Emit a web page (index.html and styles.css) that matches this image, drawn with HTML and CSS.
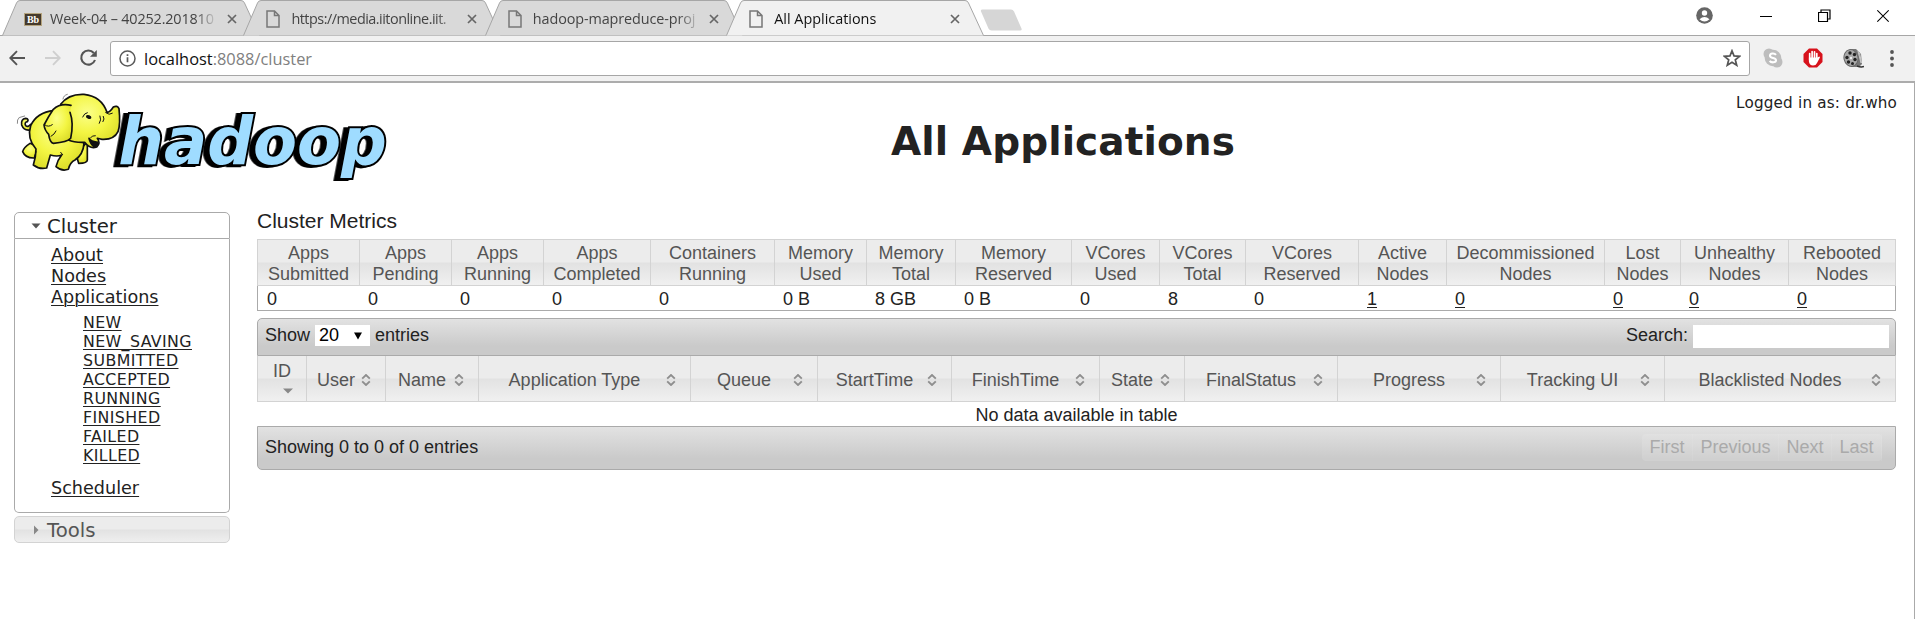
FILE: index.html
```html
<!DOCTYPE html>
<html lang="en">
<head>
<meta charset="utf-8">
<title>All Applications</title>
<link rel="stylesheet" href="styles.css">
</head>
<body>
<svg width="0" height="0" class="defs">
  <defs>
    <symbol id="doc" viewBox="0 0 14 18"><path d="M1 1h7.500L13 5.500V17H1z M8.500 1v4.500H13" fill="none" stroke="currentColor" stroke-width="1.500"/></symbol>
    <symbol id="x" viewBox="0 0 10 10"><path d="M1 1l8 8M9 1L1 9" stroke="currentColor" stroke-width="1.700"/></symbol>
    <symbol id="tab" viewBox="0 0 258 36"><path d="M.5 35.500L14.500 3Q15.500 .5 18 .5H239Q241.500 .5 242.500 3L257.500 35.500" stroke="#a6a6a6"/></symbol>
    <symbol id="sort" viewBox="0 0 10 12"><path d="M1.200 4.600L5 1l3.800 3.600M1.200 7.400L5 11l3.800-3.600" fill="none" stroke="#8e8e8e" stroke-width="1.900"/></symbol>
  </defs>
</svg>
<header class="browser">
  <div class="tabstrip">
    <div class="tab"><svg class="shape"><use href="#tab"/></svg><span class="bb">Bb</span><span class="tab-title wide">Week-04 – 40252.201810</span><svg class="close"><use href="#x"/></svg></div>
    <div class="tab"><svg class="shape"><use href="#tab"/></svg><svg class="doc"><use href="#doc"/></svg><span class="tab-title media">https://media.iitonline.iit.</span><svg class="close"><use href="#x"/></svg></div>
    <div class="tab"><svg class="shape"><use href="#tab"/></svg><svg class="doc"><use href="#doc"/></svg><span class="tab-title mapred">hadoop-mapreduce-proj</span><svg class="close"><use href="#x"/></svg></div>
    <div class="tab active"><svg class="shape"><use href="#tab"/></svg><svg class="doc"><use href="#doc"/></svg><span class="tab-title">All Applications</span><svg class="close"><use href="#x"/></svg></div>
    <svg class="newtab" width="44" height="22" viewBox="0 0 44 22"><path d="M2.500 .5H31q2 0 3 2l7.500 17q.8 2-1.500 2H11.500q-2 0-3-2L1 2.500Q.3.5 2.500.5z" fill="#d6d6d6"/></svg>
    <div class="window-controls">
      <svg width="17" height="17" viewBox="0 0 17 17"><circle cx="8.500" cy="8.500" r="8.300" fill="#666"/><circle cx="8.500" cy="6" r="2.700" fill="#fff"/><path d="M3.500 12.200q5-4.200 10 0q-5 4.600-10 0z" fill="#fff"/></svg>
      <svg width="12" height="14" viewBox="0 0 12 14"><path d="M0 7.500h12" stroke="#000"/></svg>
      <svg width="13" height="14" viewBox="0 0 13 14"><path d="M.5 3.500h9v9h-9zM3 3.500v-2.500h9v9H9.500" fill="none" stroke="#000" stroke-width="1.200"/></svg>
      <svg width="12" height="14" viewBox="0 0 12 14"><path d="M.3 1.300l11.400 11.400M11.700 1.300L.3 12.700" stroke="#000" stroke-width="1.200"/></svg>
    </div>
  </div>
  <div class="toolbar">
    <svg class="nav" width="17" height="16" viewBox="0 0 17 16"><path d="M16 8H1.500M8 1.200L1.300 8 8 14.800" fill="none" stroke="#555" stroke-width="1.900"/></svg>
    <svg class="nav" width="17" height="16" viewBox="0 0 17 16"><path d="M1 8h14.500M9 1.200L15.700 8 9 14.800" fill="none" stroke="#cfcfcf" stroke-width="1.900"/></svg>
    <svg class="nav" width="19" height="18" viewBox="0 0 19 18"><path d="M14.800 4A7.100 7.100 0 1 0 16 11" fill="none" stroke="#555" stroke-width="2.100"/><path d="M17.800 1v6.700H11z" fill="#555"/></svg>
    <div class="omnibox">
      <svg width="17" height="17" viewBox="0 0 17 17"><circle cx="8.500" cy="8.500" r="7.500" fill="none" stroke="#5a5a5a" stroke-width="1.500"/><path d="M8.500 7.300v5M8.500 4.300v1.700" stroke="#5a5a5a" stroke-width="1.700"/></svg>
      <span class="url"><b>localhost</b>:8088/cluster</span>
      <svg width="18" height="18" viewBox="0 0 18 18"><path d="M9 1.800l2 5.100 5.500.4-4.200 3.500 1.400 5.400L9 13.200l-4.700 3 1.400-5.400L1.500 7.300 7 6.900z" fill="none" stroke="#555" stroke-width="1.700"/></svg>
    </div>
    <div class="extensions">
      <svg width="20" height="20" viewBox="0 0 20 20"><circle cx="6" cy="6" r="5.500" fill="#bdbdbd"/><circle cx="14" cy="14" r="5.500" fill="#bdbdbd"/><circle cx="10" cy="10" r="8.300" fill="#bdbdbd"/><path d="M13 6.800C11.500 5 7 5 7 7.700c0 3 6 1.700 6 4.600 0 2.700-5 2.500-6.300.6" fill="none" stroke="#fff" stroke-width="2.100"/></svg>
      <svg width="20" height="20" viewBox="0 0 20 20"><path d="M6 .5h8L19.500 6v8L14 19.500H6L.5 14V6z" fill="#d7121c"/><path d="M6.700 12V5.500M9.100 10V3.500M11.500 10V3.800M13.800 11V5.500" stroke="#fff" stroke-width="1.700" stroke-linecap="round"/><path d="M5.900 9.500h8.600l1.700-1q1.200.2.600 1.300L14 15q-1 2.500-4 2.500-3.500 0-4.100-4z" fill="#fff"/></svg>
      <svg width="21" height="21" viewBox="0 0 21 21"><path d="M8 1h5l5 5 1 10-3 3H9z" fill="#777"/><path d="M15 3l3 12M16.500 5l2 10" stroke="#ccc"/><ellipse cx="8" cy="10" rx="7" ry="8.500" fill="#a8a8a8" stroke="#666" transform="rotate(-12 8 10)"/><g fill="#222"><circle cx="7" cy="5" r="1.700"/><circle cx="11.500" cy="6.500" r="1.700"/><circle cx="4" cy="9.500" r="1.700"/><circle cx="12" cy="11.500" r="1.700"/><circle cx="5.500" cy="14" r="1.700"/><circle cx="9.500" cy="15.500" r="1.500"/></g><circle cx="8" cy="10" r="1.200" fill="#eee"/><path d="M14 18q4 1.500 7 .5" stroke="#333" fill="none" stroke-width="1.500"/></svg>
      <svg width="4" height="17" viewBox="0 0 4 17"><g fill="#555"><circle cx="2" cy="2" r="1.900"/><circle cx="2" cy="8.500" r="1.900"/><circle cx="2" cy="15" r="1.900"/></g></svg>
    </div>
  </div>
</header>
<div class="page">
  <div class="masthead">
    <svg class="logo" width="375" height="100" viewBox="45 30 1125 300">
      <defs><radialGradient id="skin" cx=".45" cy=".35" r=".75"><stop offset="0" stop-color="#fbff8a"/><stop offset=".5" stop-color="#f3f542"/><stop offset="1" stop-color="#d5d522"/></radialGradient></defs>
      <text class="wordmark" x="355" y="266" textLength="806" lengthAdjust="spacingAndGlyphs">hadoop</text>
      <g stroke="#111" stroke-width="5" stroke-linejoin="round" stroke-linecap="round" fill="url(#skin)">
        <path d="M90 165Q72 168 65 150Q62 132 77 130Q88 132 82 140Q72 142 77 152Q84 158 92 148"/>
        <path d="M90 205Q70 218 68 230Q76 250 103 249L115 215z"/>
        <path d="M228 238L262 200L262 255Q262 265 236 265z"/>
        <path d="M162 106Q110 112 92 152Q80 190 108 222Q108 245 100 270Q118 284 140 279L151 240Q172 246 185 240Q172 256 168 275Q185 290 205 283Q210 262 225 255Q250 238 252 205L180 130z"/>
        <path d="M182 88Q205 56 252 58Q305 64 321 112Q330 112 340 96Q352 90 357 101Q362 148 354 170Q342 195 306 193Q298 192 292 190Q303 205 290 216Q271 224 254 202Q222 203 205 195z"/>
        <path d="M213 91Q180 84 160 103Q145 125 132 150Q134 166 146 178Q149 202 160 205Q202 202 212 190Q222 145 210 112"/>
        <path d="M267 190Q275 202 292 201Q294 215 282 215Q271 207 267 190z" fill="#111"/>
        <path d="M317 113Q328 122 337 115M300 123Q305 135 298 145M310 124Q315 132 309 140M248 126Q253 114 262 113M272 188Q275 181 286 182M135 150Q145 158 157 149M153 184Q164 178 168 168M103 250L108 230M182 232L188 239" fill="none" stroke-width="3"/>
        <ellipse cx="266" cy="126" rx="6" ry="3" fill="#111" transform="rotate(20 266 126)"/>
        <path d="M189 72Q190 61 202 58M52 145Q50 134 58 127M60 127L74 123" fill="none" stroke="#888" stroke-width="3"/>
      </g>
    </svg>
    <h1>All Applications</h1>
    <div class="login">Logged in as: dr.who</div>
  </div>
  <div class="body">
    <nav class="sidebar">
      <h3 class="section open"><svg width="10" height="6"><path d="M.5.5h9l-4.500 5z" fill="#555"/></svg>Cluster</h3>
      <div class="panel">
        <ul class="links">
          <li><a>About</a></li><li><a>Nodes</a></li><li><a>Applications</a>
            <ul class="states"><li><a>NEW</a></li><li><a>NEW_SAVING</a></li><li><a>SUBMITTED</a></li><li><a>ACCEPTED</a></li><li><a>RUNNING</a></li><li><a>FINISHED</a></li><li><a>FAILED</a></li><li><a>KILLED</a></li></ul>
          </li>
          <li><a>Scheduler</a></li>
        </ul>
      </div>
      <h3 class="section closed"><svg width="10" height="10"><path d="M3 .5v9l4.500-4.500z" fill="#888"/></svg>Tools</h3>
    </nav>
    <main class="content">
      <h2>Cluster Metrics</h2>
      <table class="metrics">
        <colgroup><col style="width:102px"><col style="width:92px"><col style="width:92px"><col style="width:107px"><col style="width:124px"><col style="width:92px"><col style="width:89px"><col style="width:116px"><col style="width:88px"><col style="width:86px"><col style="width:113px"><col style="width:88px"><col style="width:158px"><col style="width:76px"><col style="width:108px"><col style="width:108px"></colgroup>
        <thead><tr><th>Apps<br>Submitted</th><th>Apps<br>Pending</th><th>Apps<br>Running</th><th>Apps<br>Completed</th><th>Containers<br>Running</th><th>Memory<br>Used</th><th>Memory<br>Total</th><th>Memory<br>Reserved</th><th>VCores<br>Used</th><th>VCores<br>Total</th><th>VCores<br>Reserved</th><th>Active<br>Nodes</th><th>Decommissioned<br>Nodes</th><th>Lost<br>Nodes</th><th>Unhealthy<br>Nodes</th><th>Rebooted<br>Nodes</th></tr></thead>
        <tbody><tr><td>0</td><td>0</td><td>0</td><td>0</td><td>0</td><td>0 B</td><td>8 GB</td><td>0 B</td><td>0</td><td>8</td><td>0</td><td><a>1</a></td><td><a>0</a></td><td><a>0</a></td><td><a>0</a></td><td><a>0</a></td></tr></tbody>
      </table>
      <div class="bar top">
        <span>Show</span><span class="select">20<svg width="8" height="8"><path d="M0 .5h8l-4 7z" fill="#000"/></svg></span><span>entries</span>
        <span class="search-label">Search:</span><span class="search"></span>
      </div>
      <table class="apps">
        <colgroup><col style="width:49px"><col style="width:79px"><col style="width:93px"><col style="width:212px"><col style="width:127px"><col style="width:134px"><col style="width:148px"><col style="width:85px"><col style="width:153px"><col style="width:163px"><col style="width:164px"><col style="width:232px"></colgroup>
        <thead><tr>
          <th><div class="sorted">ID<svg width="10" height="6"><path d="M0 .5h10l-5 5z" fill="#888"/></svg></div></th>
          <th><div class="head"><span>User</span><svg><use href="#sort"/></svg></div></th>
          <th><div class="head"><span>Name</span><svg><use href="#sort"/></svg></div></th>
          <th><div class="head"><span>Application Type</span><svg><use href="#sort"/></svg></div></th>
          <th><div class="head"><span>Queue</span><svg><use href="#sort"/></svg></div></th>
          <th><div class="head"><span>StartTime</span><svg><use href="#sort"/></svg></div></th>
          <th><div class="head"><span>FinishTime</span><svg><use href="#sort"/></svg></div></th>
          <th><div class="head"><span>State</span><svg><use href="#sort"/></svg></div></th>
          <th><div class="head"><span>FinalStatus</span><svg><use href="#sort"/></svg></div></th>
          <th><div class="head"><span>Progress</span><svg><use href="#sort"/></svg></div></th>
          <th><div class="head"><span>Tracking UI</span><svg><use href="#sort"/></svg></div></th>
          <th><div class="head"><span>Blacklisted Nodes</span><svg><use href="#sort"/></svg></div></th>
        </tr></thead>
        <tbody><tr><td colspan="12">No data available in table</td></tr></tbody>
      </table>
      <div class="bar bottom">
        <span>Showing 0 to 0 of 0 entries</span>
        <div class="pager"><span>First</span><span>Previous</span><span>Next</span><span>Last</span></div>
      </div>
    </main>
  </div>
</div>
</body>
</html>
```
FILE: styles.css
```css
* { box-sizing: border-box; }
body { margin: 0; height: 619px; overflow: hidden; display: flex; flex-direction: column; background: #fff; color: #222; font: 18px/21px "Liberation Sans", Arial, sans-serif; }
svg { flex: none; display: block; }
.defs { position: absolute; }

/* Browser frame */
.browser { font-family: "Open Sans", "Noto Sans", sans-serif; height: 83px; }
.tabstrip { display: flex; height: 36px; padding-left: 2px; box-shadow: inset 0 -1px #a6a6a6; }
.tab { position: relative; z-index: 0; display: flex; align-items: center; width: 258px; height: 36px; margin-right: -16.600px; padding-left: 22px; color: #444; }
.tab.active { z-index: 1; color: #111; }
.shape { position: absolute; z-index: -1; left: 0; top: 0; width: 258px; height: 36px; fill: #d9d9d9; }
.active .shape { fill: #f1f1f1; }
.doc { width: 14px; height: 18px; color: #777; margin: 2px 11px 0 1px; }
.close { width: 10px; height: 10px; color: #666; margin: 2px 0 0 11px; }
.bb { width: 18px; height: 13px; margin: 2px 8px 0 0; background: #453a2c; border: 1px solid #b5a47e; color: #fff; font: bold 10px/11px "Liberation Serif", serif; text-align: center; }
.tab-title { width: 165px; height: 22px; margin-top: 1px; line-height: 22px; font-size: 14.400px; white-space: nowrap; -webkit-mask-image: linear-gradient(90deg, #000 145px, transparent 168px); mask-image: linear-gradient(90deg, #000 145px, transparent 168px); }
.wide { width: 166px; letter-spacing: -.15px; }
.media { letter-spacing: -.5px; }
.mapred { letter-spacing: -.1px; }
.newtab { margin: 9px 0 0 12px; }
.window-controls { display: flex; align-items: center; margin-left: auto; padding: 0 26px 4px 0; }
.window-controls svg:first-child { margin-top: -2px; }
.window-controls svg:nth-child(2) { margin-left: 47px; }
.window-controls svg:nth-child(3) { margin-left: 46px; }
.window-controls svg:nth-child(4) { margin-left: 46px; }
.toolbar { display: flex; align-items: center; height: 47px; padding: 0 21px 1px 9px; background: #f1f1f1; border-bottom: 2px solid #acacac; }
.nav { margin-right: 18px; }
.nav:nth-child(3) { margin-right: 12px; }
.omnibox { display: flex; align-items: center; flex: 1; height: 35px; padding: 0 8px; border: 1px solid #a6a6a6; border-radius: 3px; background: #fff; }
.url { flex: 1; padding: 1px 0 0 8px; font-size: 16.400px; color: #808080; }
.url b { font-weight: normal; color: #111; }
.extensions { display: flex; align-items: center; gap: 20px; margin-left: 13px; }
.extensions svg:last-child { margin-left: 6px; }

/* Page */
.page { flex: 1; border-right: 1px solid #aaa; padding-right: 18px; }
.masthead { display: grid; grid-template-columns: 390px 1346px 160px; height: 125px; }
.logo { margin: 2px 0 0 15px; overflow: visible; }
.wordmark { font: italic bold 196px "DejaVu Sans", sans-serif; fill: #9fdcff; stroke: #000; stroke-width: 12px; paint-order: stroke; stroke-linejoin: miter; filter: drop-shadow(-14px 3px 0 #000); }
h1 { margin: 36px 0 0; text-align: center; font: bold 39px/46px "DejaVu Sans", Verdana, sans-serif; letter-spacing: .1px; }
.login { padding-top: 9px; text-align: right; white-space: nowrap; font: 15.200px/22px "DejaVu Sans", Verdana, sans-serif; letter-spacing: .2px; }
.body { display: flex; align-items: flex-start; gap: 27px; padding-left: 14px; }
.sidebar { width: 216px; padding-top: 4px; font-family: "DejaVu Sans", Verdana, sans-serif; }
.section { display: flex; align-items: center; gap: 6px; margin: 0; height: 27px; padding: 1px 0 0 16px; border: 1px solid #aaa; font-size: 19.700px; font-weight: normal; }
.open { border-radius: 5px 5px 0 0; }
.closed { margin-top: 3px; border-color: #d3d3d3; border-radius: 5px; color: #555; background: linear-gradient(#ececec 49%, #e2e2e2 51%, #efefef); }
.panel { height: 274px; padding: 6px 0 0 36px; border: 1px solid #aaa; border-top: 0; border-radius: 0 0 5px 5px; }
ul { margin: 0; padding: 0; list-style: none; }
a { text-decoration: underline; text-underline-offset: 2px; text-decoration-thickness: 1px; }
.links { font-size: 17.600px; line-height: 21px; }
.states { margin: 5px 0 13px; padding-left: 32px; font-size: 15.800px; line-height: 19px; letter-spacing: .4px; }
.content { width: 1639px; }
h2 { margin: 2px 0 8px; font-size: 21px; line-height: 21px; font-weight: normal; }
table { width: 1639px; table-layout: fixed; border-collapse: separate; border-spacing: 0; }
th { padding: 0; font-weight: normal; color: #555; border: 1px solid #d3d3d3; border-right-width: 0; background: linear-gradient(#ececec 49%, #e2e2e2 51%, #f0f0f0); }
th:last-child { border-right-width: 1px; }
td { padding: 0; }
.metrics { margin-bottom: 7px; }
.metrics th { height: 47px; padding-top: 2px; }
.metrics td { height: 25px; padding: 2px 0 0 9px; border-bottom: 1px solid #aaa; }
.metrics td:first-child { border-left: 1px solid #aaa; }
.metrics td:last-child { border-right: 1px solid #aaa; }
.bar { display: flex; align-items: center; border: 1px solid #aaa; background: linear-gradient(#e2e2e2, #cacaca 75%, #cacaca); padding-left: 7px; }
.top { height: 38px; padding-right: 6px; padding-bottom: 4px; border-radius: 5px 5px 0 0; }
.select { display: flex; align-items: center; justify-content: space-between; width: 55px; height: 21px; margin: 1px 5px 0; padding: 0 8px 0 4px; background: #fff; color: #000; }
.search-label { margin-left: auto; }
.search { width: 196px; height: 23px; margin: 3px 0 0 5px; background: #fff; }
.apps th { height: 46px; border-top: 0; }
.head { display: flex; align-items: center; justify-content: center; padding: 3px 14px 0 0; }
.head span { flex: 1; white-space: nowrap; padding-left: 4px; }
.head svg { width: 10px; height: 12px; }
.sorted { display: flex; flex-direction: column; align-items: center; gap: 6px; padding-bottom: 2px; }
.sorted svg { margin-left: 12px; }
.apps td { height: 24px; padding-top: 2px; text-align: center; }
.bottom { height: 44px; padding: 0 13px 2px 7px; border-radius: 0 0 5px 5px; }
.pager { display: flex; margin-left: auto; color: #aaa; background: rgba(255,255,255,.12); border-radius: 4px; }
.pager span { padding: 3px 7.500px; border-right: 1px solid rgba(255,255,255,.08); }
```
